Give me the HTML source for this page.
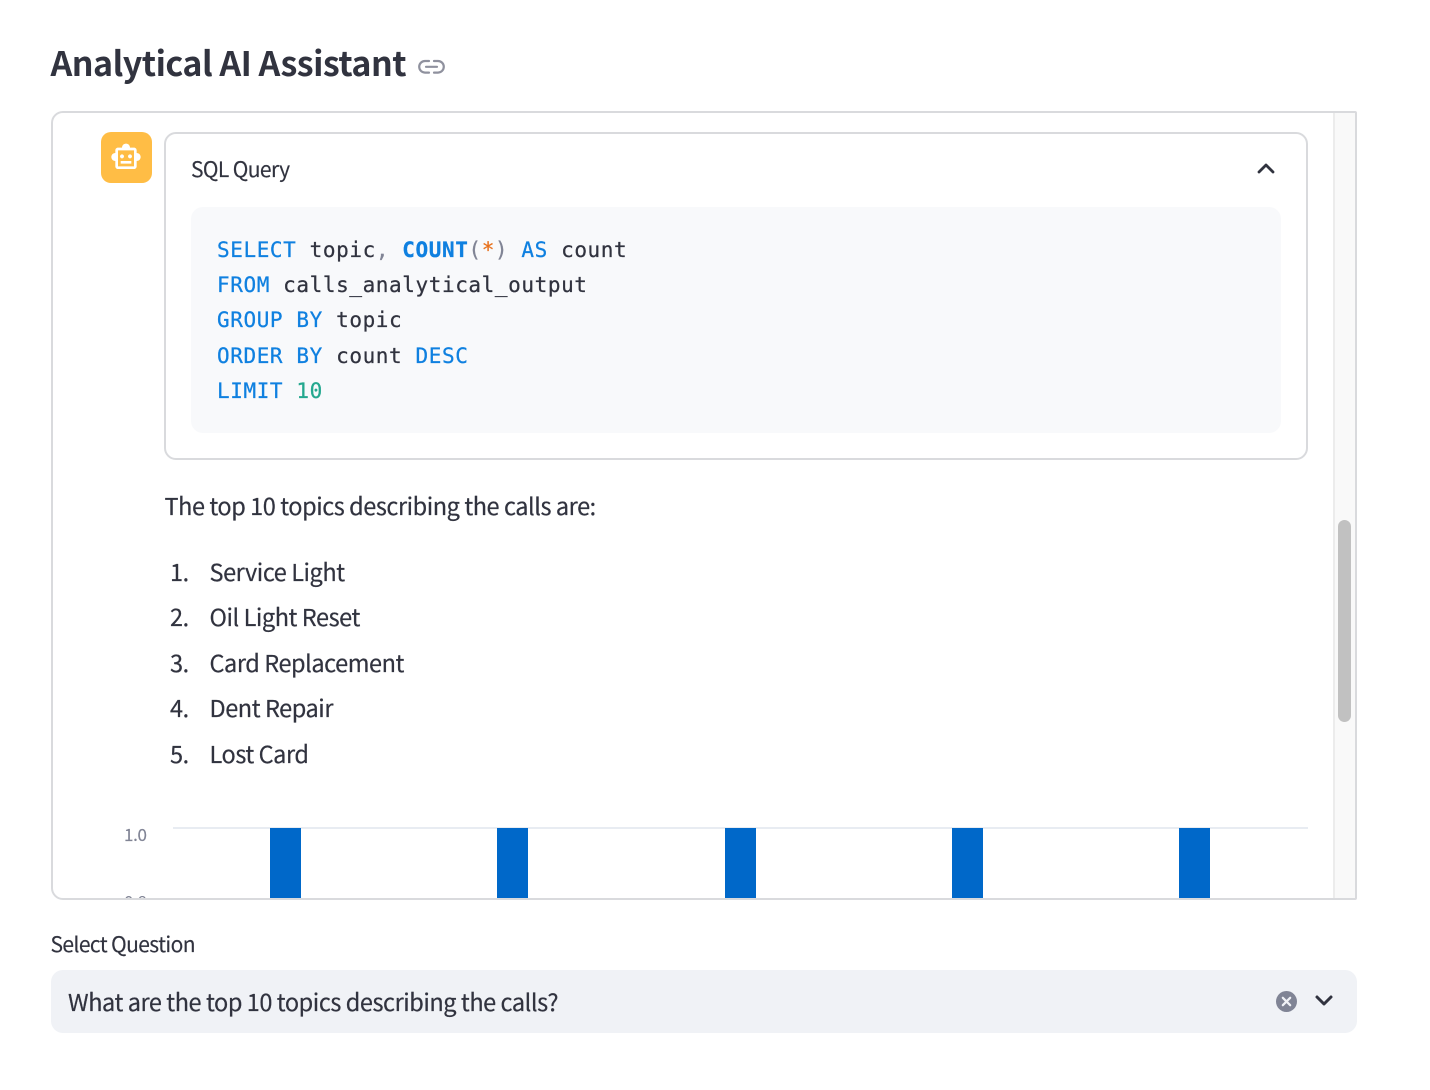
<!DOCTYPE html>
<html lang="en">
<head>
<meta charset="utf-8">
<title>Analytical AI Assistant</title>
<style>
html,body{margin:0;padding:0;width:1430px;height:1090px;background:#fff;overflow:hidden}
body{position:relative;font-family:"Noto Sans CJK SC","Liberation Sans",sans-serif;color:#31333f;filter:blur(.35px)}
.t{position:absolute;white-space:pre;line-height:40px;height:40px}
.a{position:absolute}
.m{font-family:"DejaVu Sans Mono","Liberation Mono",monospace;font-size:21px;letter-spacing:.59px;color:#31333f;-webkit-text-stroke:.25px currentColor}
.k{color:#0f80e0}.b{font-weight:bold}.n{color:#24a88f}.o{color:#e8711c}.p{color:#808495}
.b26{font-size:23.5px;letter-spacing:-.44px;-webkit-text-stroke:.2px currentColor}
.s21{font-size:21px;letter-spacing:-.6px;-webkit-text-stroke:.15px currentColor}
</style>
</head>
<body>
<div class="t" style="left:50.500px;top:42px;font-size:34px;font-weight:600;letter-spacing:-.52px">Analytical AI Assistant</div>
<svg class="a" style="left:418px;top:58px" width="28" height="18" viewBox="0 0 28 18" fill="none" stroke="#8f919e" stroke-width="2.2" stroke-linecap="round"><path d="M11 3H7a5.800 5.800 0 0 0 0 11.600h4M16 3h4a5.800 5.800 0 0 1 0 11.600h-4M8 8.800h11"/></svg>

<div class="a" style="left:51px;top:111px;width:1302px;height:785px;border:2px solid #d9dadd;border-radius:12px 2px 2px 12px;overflow:hidden;background:#fff">
  <div class="a" style="left:1280px;top:0;width:22px;height:785px;background:#f9f9f9;border-left:2px solid #ececec;box-sizing:border-box"></div>
  <div class="a" style="left:1285px;top:407px;width:13px;height:202px;background:#c1c1c1;border-radius:7px"></div>

  <div class="a" style="left:120px;top:714px;width:1135px;height:2px;background:#e8ecf2"></div>
  <div class="a" style="left:217px;top:715px;width:31px;height:75px;background:#0068c9"></div>
  <div class="a" style="left:444px;top:715px;width:31px;height:75px;background:#0068c9"></div>
  <div class="a" style="left:672px;top:715px;width:31px;height:75px;background:#0068c9"></div>
  <div class="a" style="left:899px;top:715px;width:31px;height:75px;background:#0068c9"></div>
  <div class="a" style="left:1126px;top:715px;width:31px;height:75px;background:#0068c9"></div>
  <div class="t" style="left:71px;top:701px;font-size:17px;letter-spacing:-.3px;color:#808495;-webkit-text-stroke:.15px currentColor">1.0</div>
  <div class="t" style="left:71px;top:768px;font-size:17px;letter-spacing:-.3px;color:#808495">0.8</div>
</div>

<div class="a" style="left:101px;top:132px;width:51px;height:51px;background:#ffbd45;border-radius:10px"></div>
<svg class="a" style="left:110px;top:141px" width="32" height="32" viewBox="0 0 24 24" fill="#fff"><path d="M20 9V7c0-1.100-.9-2-2-2h-3c0-1.660-1.340-3-3-3S9 3.340 9 5H6c-1.100 0-2 .9-2 2v2c-1.660 0-3 1.340-3 3s1.340 3 3 3v4c0 1.100.9 2 2 2h12c1.100 0 2-.9 2-2v-4c1.660 0 3-1.340 3-3s-1.340-3-3-3zm-2 10H6V7h12v12zm-9-6c-.83 0-1.500-.67-1.500-1.500S8.170 10 9 10s1.500.67 1.500 1.500S9.830 13 9 13zm7.500-1.500c0 .83-.67 1.500-1.500 1.500s-1.500-.67-1.500-1.500.67-1.500 1.500-1.500 1.500.67 1.500 1.500zM8 15h8v2H8v-2z"/></svg>

<div class="a" style="left:164px;top:132px;width:1140px;height:324px;border:2px solid #d9dadd;border-radius:12px"></div>
<div class="t s21" style="left:191px;top:149px">SQL Query</div>
<svg class="a" style="left:1256px;top:161px" width="20" height="14" viewBox="0 0 20 14" fill="none" stroke="#31333f" stroke-width="2.800" stroke-linecap="round" stroke-linejoin="round"><path d="M3 11l7-7 7 7"/></svg>
<div class="a" style="left:191px;top:207px;width:1090px;height:226px;background:#f8f9fb;border-radius:12px"></div>

<div class="t m" style="left:217px;top:230px"><span class="k">SELECT</span> topic<span class="p">,</span> <span class="k b">COUNT</span><span class="p">(</span><span class="o">*</span><span class="p">)</span> <span class="k">AS</span> count</div>
<div class="t m" style="left:217px;top:265px"><span class="k">FROM</span> calls_analytical_output</div>
<div class="t m" style="left:217px;top:300px"><span class="k">GROUP BY</span> topic</div>
<div class="t m" style="left:217px;top:336px"><span class="k">ORDER BY</span> count <span class="k">DESC</span></div>
<div class="t m" style="left:217px;top:371px"><span class="k">LIMIT</span> <span class="n">10</span></div>

<div class="t b26" style="left:164.500px;top:485px">The top 10 topics describing the calls are:</div>
<div class="t b26" style="left:170px;top:551px">1.</div><div class="t b26" style="left:209.500px;top:551px">Service Light</div>
<div class="t b26" style="left:170px;top:596px">2.</div><div class="t b26" style="left:209.500px;top:596px">Oil Light Reset</div>
<div class="t b26" style="left:170px;top:642px">3.</div><div class="t b26" style="left:209.500px;top:642px">Card Replacement</div>
<div class="t b26" style="left:170px;top:687px">4.</div><div class="t b26" style="left:209.500px;top:687px">Dent Repair</div>
<div class="t b26" style="left:170px;top:733px">5.</div><div class="t b26" style="left:209.500px;top:733px">Lost Card</div>

<div class="t s21" style="left:50.500px;top:924px">Select Question</div>
<div class="a" style="left:51px;top:970px;width:1306px;height:63px;background:#f0f2f6;border-radius:12px"></div>
<div class="t b26" style="left:68px;top:981px">What are the top 10 topics describing the calls?</div>
<svg class="a" style="left:1275px;top:990px" width="23" height="23" viewBox="0 0 23 23"><circle cx="11.500" cy="11.500" r="10.500" fill="#808495"/><path d="M7.800 7.800l7.400 7.400M15.200 7.800l-7.400 7.400" stroke="#f0f2f6" stroke-width="2.200" stroke-linecap="round"/></svg>
<svg class="a" style="left:1314px;top:994px" width="20" height="14" viewBox="0 0 20 14" fill="none" stroke="#31333f" stroke-width="3" stroke-linecap="round" stroke-linejoin="round"><path d="M3 3l7 7 7-7"/></svg>
</body>
</html>
